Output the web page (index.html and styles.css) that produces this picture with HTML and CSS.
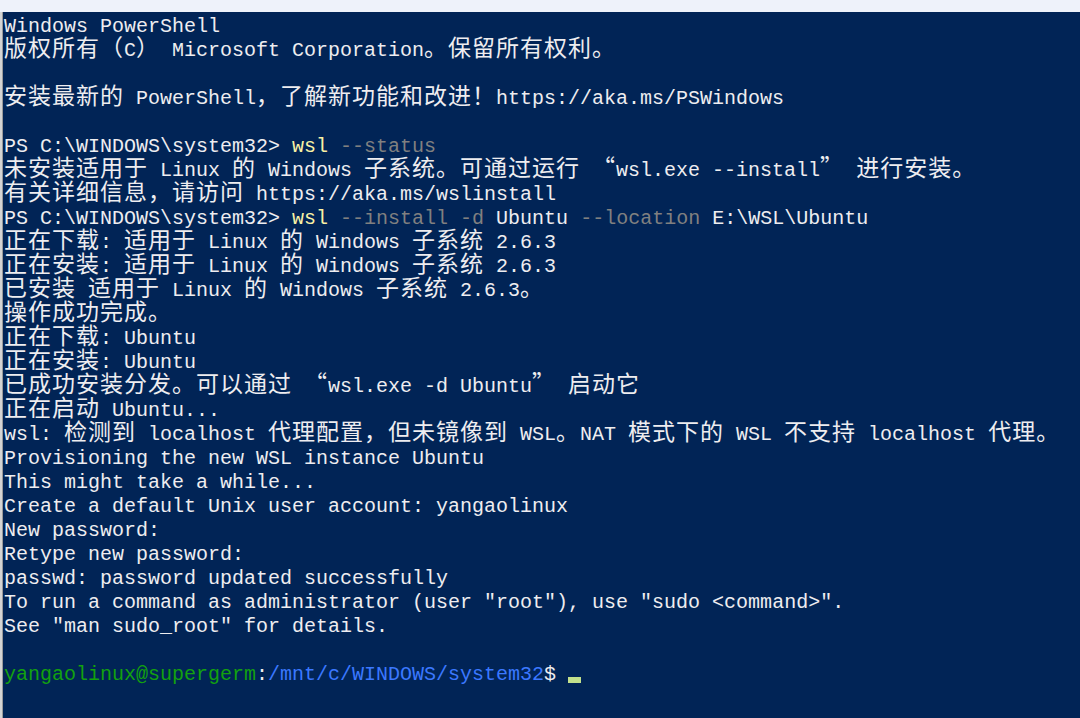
FILE: index.html
```html
<!DOCTYPE html>
<html lang="zh-CN">
<head>
<meta charset="utf-8">
<title>Windows PowerShell</title>
<link rel="stylesheet" href="styles.css">
</head>
<body>
<div class="topbar"></div>
<div class="frame">
  <div class="edge"></div>
  <div class="term">
<div class="l">Windows PowerShell</div>
<div class="l"><span class="c">版权所有（</span>C<span class="c">）</span> Microsoft Corporation<span class="c">。保留所有权利。</span></div>
<div class="l"></div>
<div class="l"><span class="c">安装最新的</span> PowerShell<span class="c">，了解新功能和改进！</span>https://aka.ms/PSWindows</div>
<div class="l"></div>
<div class="l">PS C:\WINDOWS\system32&gt; <span class="y">wsl</span> <span class="g">--status</span></div>
<div class="l"><span class="c">未安装适用于</span> Linux <span class="c">的</span> Windows <span class="c">子系统。可通过运行</span> <span class="c">“</span>wsl.exe --install<span class="c">”</span> <span class="c">进行安装。</span></div>
<div class="l"><span class="c">有关详细信息，请访问</span> https://aka.ms/wslinstall</div>
<div class="l">PS C:\WINDOWS\system32&gt; <span class="y">wsl</span> <span class="g">--install -d</span> Ubuntu <span class="g">--location</span> E:\WSL\Ubuntu</div>
<div class="l"><span class="c">正在下载</span>: <span class="c">适用于</span> Linux <span class="c">的</span> Windows <span class="c">子系统</span> 2.6.3</div>
<div class="l"><span class="c">正在安装</span>: <span class="c">适用于</span> Linux <span class="c">的</span> Windows <span class="c">子系统</span> 2.6.3</div>
<div class="l"><span class="c">已安装</span> <span class="c">适用于</span> Linux <span class="c">的</span> Windows <span class="c">子系统</span> 2.6.3<span class="c">。</span></div>
<div class="l"><span class="c">操作成功完成。</span></div>
<div class="l"><span class="c">正在下载</span>: Ubuntu</div>
<div class="l"><span class="c">正在安装</span>: Ubuntu</div>
<div class="l"><span class="c">已成功安装分发。可以通过</span> <span class="c">“</span>wsl.exe -d Ubuntu<span class="c">”</span> <span class="c">启动它</span></div>
<div class="l"><span class="c">正在启动</span> Ubuntu...</div>
<div class="l">wsl: <span class="c">检测到</span> localhost <span class="c">代理配置，但未镜像到</span> WSL<span class="c">。</span>NAT <span class="c">模式下的</span> WSL <span class="c">不支持</span> localhost <span class="c">代理。</span></div>
<div class="l">Provisioning the new WSL instance Ubuntu</div>
<div class="l">This might take a while...</div>
<div class="l">Create a default Unix user account: yangaolinux</div>
<div class="l">New password:</div>
<div class="l">Retype new password:</div>
<div class="l">passwd: password updated successfully</div>
<div class="l">To run a command as administrator (user "root"), use "sudo &lt;command&gt;".</div>
<div class="l">See "man sudo_root" for details.</div>
<div class="l"></div>
<div class="l"><span class="pg">yangaolinux@supergerm</span>:<span class="pb">/mnt/c/WINDOWS/system32</span>$ <span class="cursor"></span></div>
  </div>
</div>
</body>
</html>
```

FILE: styles.css
```css
html, body {
  margin: 0;
  padding: 0;
  height: 100%;
  overflow: hidden;
  background: #012456;
}

body {
  display: flex;
  flex-direction: column;
}

.topbar {
  height: 12px;
  flex: 0 0 12px;
  background: #eef2fa;
}

.frame {
  flex: 1;
  display: flex;
}

.edge {
  width: 3px;
  flex: 0 0 3px;
  background: linear-gradient(to right, #d4d4d4 0, #d4d4d4 2px, #9a9a9a 2px, #9a9a9a 3px);
}

.term {
  flex: 1;
  padding: 3px 0 0 1px;
  color: #eeedf0;
  font-family: "Liberation Mono", "Noto Sans CJK SC", monospace;
  font-size: 20px;
  line-height: 24px;
}

.l {
  height: 24px;
  white-space: pre;
}

.c {
  font-family: "Noto Sans CJK SC", "Noto Sans CJK JP", sans-serif;
  font-size: 23px;
  letter-spacing: 1px;
  line-height: 0;
}

.y { color: #f9f1a5; }
.g { color: #808080; }
.pg { color: #13a10e; }
.pb { color: #3b78ff; }

.cursor {
  display: inline-block;
  width: 13px;
  height: 6px;
  vertical-align: -3px;
  background: #c3e08c;
}
```
